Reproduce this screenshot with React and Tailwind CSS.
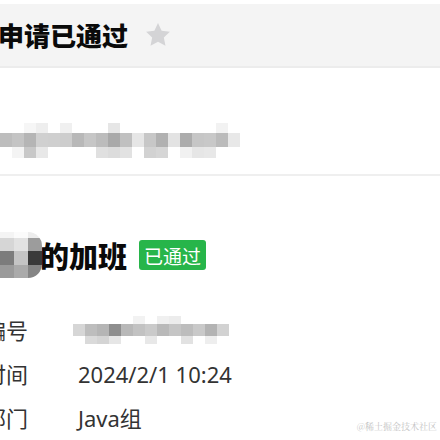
import React from "react";

const lineRows = [
  ["#fff","#fff","#f6f6f6","#eeeeee","#fff","#f0f0f0","#fff","#fff","#fff","#e6e6e6","#fff","#fff","#fff","#fff","#fff","#fff","#fff","#fff","#f2f2f2","#fff"],
  ["#bdbdbd","#c4c4c4","#b5b5b5","#d0d0d0","#cfcfcf","#cdcdcd","#b8b8b8","#c6c6c6","#bcbcbc","#a9a9a9","#c0c0c0","#e6e6e6","#c7c7c7","#b1b1b1","#e3e3e3","#acacac","#c6c6c6","#c8c8c8","#bbbbbb","#e8e8e8"],
  ["#fff","#f4f4f4","#c8c8c8","#e8e8e8","#fff","#fff","#fff","#fff","#e0e0e0","#dcdcdc","#e2e2e2","#fff","#d2d2d2","#d6d6d6","#fff","#f1f1f1","#e6e6e6","#e8e8e8","#fff","#fff"],
];

const numRows = [
  ["#fff","#fff","#fff","#fff","#fff","#f2f2f2","#fff","#f0f0f0","#ececec","#fff","#fff","#fff","#fff"],
  ["#d6d6d6","#bdbdbd","#b5b5b5","#8e8e8e","#b8b8b8","#c2c2c2","#cacaca","#b9b9b9","#c5c5c5","#bdbdbd","#c9c9c9","#b3b3b3","#d2d2d2"],
  ["#fff","#dadada","#d4d4d4","#e6e6e6","#fff","#fff","#e8e8e8","#fff","#fff","#e2e2e2","#fff","#eeeeee","#fff"],
];

const blobRows = [
  ["#f4f4f4","#fbfbfb","#ededed"],
  ["#d6d6d6","#e2e2e2","#9c9c9c"],
  ["#7c7c7c","#c4c4c4","#3a3a3a"],
  ["#9a9a9a","#aaaaaa","#858585"],
];

function Mosaic({ rows, bw, heights }) {
  return (
    <div className="flex flex-col">
      {rows.map((r, i) => (
        <div key={i} className="flex">
          {r.map((c, j) => (
            <div key={j} style={{ width: bw, height: heights[i], backgroundColor: c }} />
          ))}
        </div>
      ))}
    </div>
  );
}

export default function App() {
  const font = { fontFamily: '"Noto Sans", "Noto Sans CJK SC", sans-serif' };
  return (
    <div className="relative w-[440px] h-[440px] overflow-hidden bg-white text-[#333]" style={font}>
      <div className="h-[4px]" />
      <div className="h-[62px] bg-[#f4f4f4] flex items-center">
        <div className="ml-[-2px] text-[26px] font-black text-[#0a0a0a] leading-none" style={{ fontFamily: '"Noto Sans CJK SC", sans-serif' }}>申请已通过</div>
        <svg className="ml-[16px]" width="28" height="28" viewBox="0 0 24 24">
          <path d="M12 1.8l3.1 6.6 7.1.9-5.2 4.9 1.4 7.1L12 17.8l-6.4 3.5 1.4-7.1-5.2-4.9 7.1-.9z" fill="#d4d4d6" />
        </svg>
      </div>
      <div className="h-[2px] bg-[#ececec]" />
      <div className="h-[106px] pt-[55px]">
        <Mosaic rows={lineRows} bw={12} heights={[10, 14, 11]} />
      </div>
      <div className="h-[2px] bg-[#efefef]" />
      <div className="h-[56px]" />
      <div className="h-[46px] flex items-center">
        <div className="relative w-[42px] h-[46px] overflow-hidden rounded-r-[14px]">
          <Mosaic rows={blobRows} bw={14} heights={[6, 13, 14, 13]} />
        </div>
        <div className="ml-[-2px] text-[29px] font-black text-[#0a0a0a] leading-none" style={{ fontFamily: '"Noto Sans CJK SC", sans-serif' }}>的加班</div>
        <div className="ml-[12px] h-[30px] w-[67px] rounded-[3px] bg-[#27b54a] text-white text-[19px] leading-none flex items-center justify-center" style={{ fontFamily: '"Noto Sans CJK SC", sans-serif' }}>已通过</div>
      </div>
      <div className="h-[30px]" />
      <div className="flex flex-col text-[22px] leading-none">
        <div className="h-[44px] flex items-center">
          <div className="ml-[-16px] w-[89px]">编号</div>
          <Mosaic rows={numRows} bw={12} heights={[8, 12, 8]} />
        </div>
        <div className="h-[44px] flex items-center">
          <div className="ml-[-16px] w-[94px]">时间</div>
          <div>2024/2/1 10:24</div>
        </div>
        <div className="h-[44px] flex items-center">
          <div className="ml-[-16px] w-[94px]">部门</div>
          <div>Java组</div>
        </div>
      </div>
      <div className="absolute right-[3px] bottom-[9px] text-[9px] leading-none text-[#c4c4c4]" style={{ fontFamily: '"Noto Serif CJK SC", "Noto Sans CJK SC", serif' }}>@稀土掘金技术社区</div>
    </div>
  );
}
